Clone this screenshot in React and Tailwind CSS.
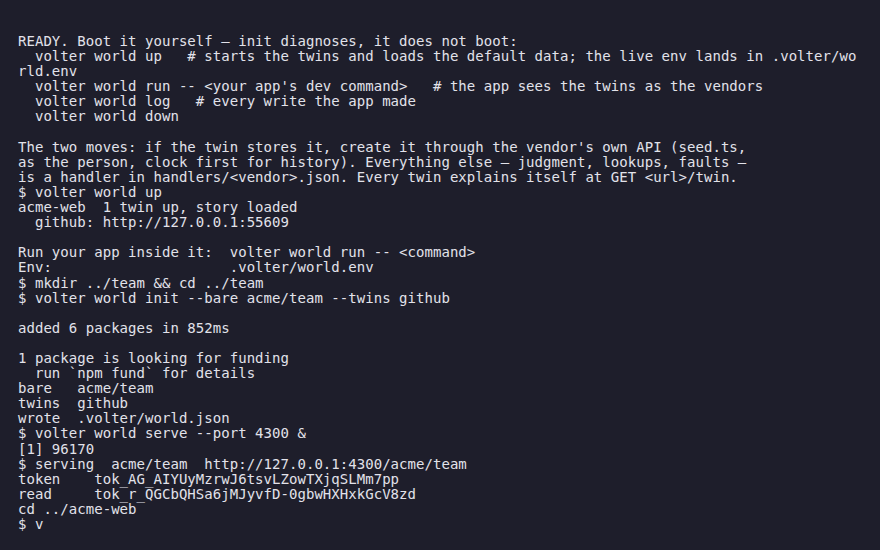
export default function App() {
  const lines = [
    "READY. Boot it yourself — init diagnoses, it does not boot:",
    "  volter world up   # starts the twins and loads the default data; the live env lands in .volter/wo",
    "rld.env",
    "  volter world run -- <your app's dev command>   # the app sees the twins as the vendors",
    "  volter world log   # every write the app made",
    "  volter world down",
    "",
    "The two moves: if the twin stores it, create it through the vendor's own API (seed.ts,",
    "as the person, clock first for history). Everything else — judgment, lookups, faults —",
    "is a handler in handlers/<vendor>.json. Every twin explains itself at GET <url>/twin.",
    "$ volter world up",
    "acme-web  1 twin up, story loaded",
    "  github: http://127.0.0.1:55609",
    "",
    "Run your app inside it:  volter world run -- <command>",
    "Env:                     .volter/world.env",
    "$ mkdir ../team && cd ../team",
    "$ volter world init --bare acme/team --twins github",
    "",
    "added 6 packages in 852ms",
    "",
    "1 package is looking for funding",
    "  run `npm fund` for details",
    "bare   acme/team",
    "twins  github",
    "wrote  .volter/world.json",
    "$ volter world serve --port 4300 &",
    "[1] 96170",
    "$ serving  acme/team  http://127.0.0.1:4300/acme/team",
    "token    tok_AG_AIYUyMzrwJ6tsvLZowTXjqSLMm7pp",
    "read     tok_r_QGCbQHSa6jMJyvfD-0gbwHXHxkGcV8zd",
    "cd ../acme-web",
    "$ v",
  ];
  return (
    <div className="w-[880px] h-[550px] overflow-hidden bg-[#1e1e2b] pl-[18px] pt-[34px]">
      <pre className="m-0 font-['DejaVu_Sans_Mono',monospace] text-[14px] leading-[15.1px] tracking-[0.04px] text-[#e2e2ea] whitespace-pre">
        {lines.map((l, i) => (
          <div key={i} className="h-[15.1px]">{l}</div>
        ))}
      </pre>
    </div>
  );
}
